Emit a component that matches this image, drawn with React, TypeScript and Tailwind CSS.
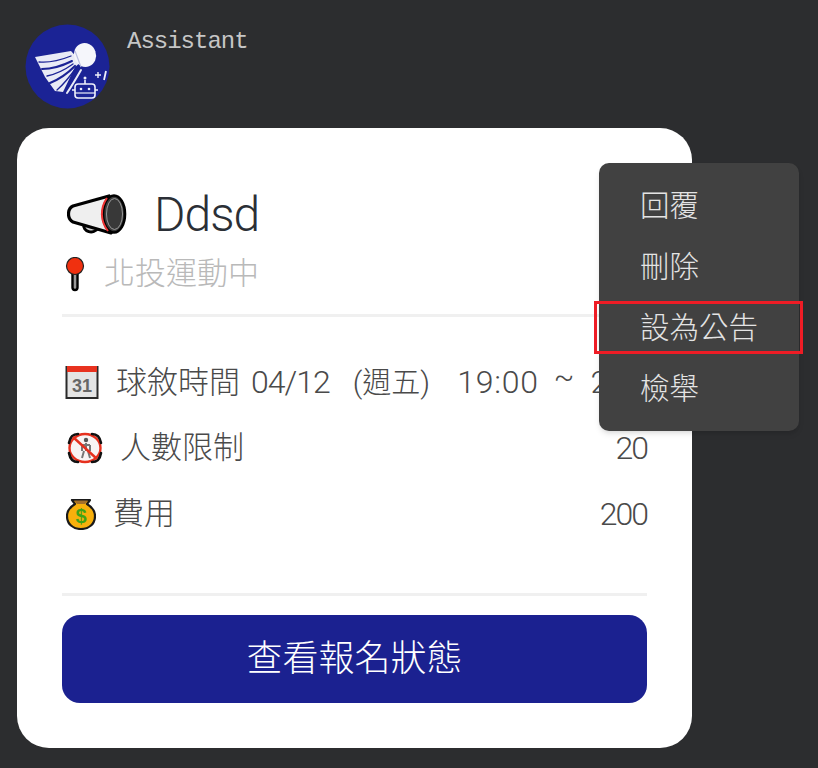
function Avatar() {
  return (
    <svg viewBox="0 0 85 85" className="w-[85px] h-[85px] shrink-0">
      <circle cx="42.5" cy="42.5" r="42" fill="#1b2395" />
      <path d="M10 33 L46 27 L56 38 L50 43 L38 68 L30 67 L20 53 Z" fill="#e9ebf6" />
      <g stroke="#1b2395" fill="none" strokeLinecap="round">
        <path d="M14 38 C24 39 36 36 46 32" strokeWidth="1.3" />
        <path d="M17 45 C28 45 39 41 47 37" strokeWidth="2" />
        <path d="M22 52 C32 50 41 45 48 40" strokeWidth="1.3" />
        <path d="M25 59 C35 55 44 48 50 42" strokeWidth="2.2" />
        <path d="M32 66 C40 59 46 51 51 44" strokeWidth="1.3" />
      </g>
      <path d="M42 69 C48 60 52 53 56 46" fill="none" stroke="#e9ebf6" strokeWidth="2" strokeLinecap="round" />
      <ellipse cx="60" cy="31" rx="11" ry="12" transform="rotate(-20 60 31)" fill="#f5f6fb" />
      <path d="M50 27 L56 43" stroke="#b9bde0" strokeWidth="1.2" />
      <g stroke="#eef0fa" fill="none" strokeWidth="1.6">
        <rect x="50" y="60" width="20" height="14" rx="3" />
        <path d="M47 66 H50 M70 66 H73 M60 56 V60" />
      </g>
      <circle cx="60" cy="54" r="1.5" fill="#eef0fa" />
      <circle cx="56" cy="65" r="1.3" fill="#eef0fa" />
      <circle cx="64" cy="65" r="1.3" fill="#eef0fa" />
      <path d="M50 69 H70" stroke="#eef0fa" strokeWidth="1.2" />
      <path d="M70 51 H76 M73 48 V54" stroke="#eef0fa" strokeWidth="1.4" />
      <path d="M79 56 L81 47" stroke="#eef0fa" strokeWidth="1.8" />
    </svg>
  );
}

function Megaphone() {
  return (
    <svg viewBox="0 0 60 42" className="ml-[5px] w-[60px] h-[42px]">
      <path d="M17 30 C15 38 27 41 31 34 Z" fill="#cfcfcf" stroke="#000" strokeWidth="3" />
      <path d="M6 12 L42 2 C36 12 36 28 44 39 L6 28 C0 25 0 15 6 12 Z" fill="#efefef" stroke="#000" strokeWidth="3.2" strokeLinejoin="round" />
      <ellipse cx="47" cy="20" rx="11" ry="18.5" fill="#3a3a3a" stroke="#000" strokeWidth="2.6" />
      <ellipse cx="47.5" cy="20" rx="8" ry="15.5" fill="#383838" stroke="#9a9a9a" strokeWidth="1" />
      <path d="M40 4 C33 14 33 27 41 37" fill="none" stroke="#ee3333" strokeWidth="2" />
    </svg>
  );
}

function Pin() {
  return (
    <svg viewBox="0 0 20 35" className="ml-[3px] w-[20px] h-[35px]">
      <rect x="7.5" y="14" width="5" height="19" rx="2.5" fill="#9a9a9a" stroke="#000" strokeWidth="2.4" />
      <circle cx="10" cy="9" r="8.5" fill="#f0300f" stroke="#222" strokeWidth="1.2" />
    </svg>
  );
}

function CalendarIcon() {
  return (
    <svg viewBox="0 0 34 34" className="ml-[3px] w-[34px] h-[34px] shrink-0">
      <rect x="1.5" y="2" width="31" height="31" fill="#e4e4e4" stroke="#2a2a2a" strokeWidth="2" />
      <rect x="2" y="1" width="30" height="6" fill="#e8321f" />
      <text x="17" y="27" textAnchor="middle" fontSize="18" fontWeight="700" fill="#666" className="font-['Liberation_Sans']">31</text>
    </svg>
  );
}

function NoPeople() {
  return (
    <svg viewBox="0 0 36 32" className="ml-[5px] w-[36px] h-[32px] shrink-0">
      <ellipse cx="18" cy="16" rx="15.5" ry="14" fill="#f8f4f4" stroke="#e6301e" strokeWidth="2.4" />
      <g fill="none" stroke="#111" strokeWidth="2.6" strokeLinecap="round">
        <path d="M2 11 C3 5 6 2 11 2" />
        <path d="M25 2 C30 2 33 5 34 11" />
        <path d="M2 21 C3 27 6 30 11 30" />
        <path d="M25 30 C30 30 33 27 34 21" />
      </g>
      <circle cx="19" cy="8" r="2.2" fill="#555" />
      <path d="M19 11 V19 M15 13 H23 M15 13 V19 M23 13 V19 M17 19 L15 26 M21 19 L23 26" stroke="#777" strokeWidth="2" />
      <path d="M6 5 L30 27" stroke="#e6301e" strokeWidth="2.4" />
    </svg>
  );
}

function MoneyBag() {
  return (
    <svg viewBox="0 0 30 32" className="ml-[4px] w-[30px] h-[32px] shrink-0">
      <path d="M6 2 H24 L21 6 C26 9 29 13 29 18 C29 26 23 31 15 31 C7 31 1 26 1 18 C1 13 4 9 9 6 Z" fill="#f8b00c" stroke="#1a1a1a" strokeWidth="2.2" strokeLinejoin="round" />
      <path d="M8 2.5 H22 L19 6 H11 Z" fill="#a5702a" />
      <text x="15" y="25" textAnchor="middle" fontSize="20" fontWeight="700" fill="#3fa317" className="font-['Liberation_Sans']">$</text>
    </svg>
  );
}

function InfoRow({ icon, children, value }: { icon: React.ReactNode; children: React.ReactNode; value?: string }) {
  return (
    <div className="flex items-center justify-between h-[66px]">
      <div className="flex items-center gap-[17px] whitespace-nowrap">
        {icon}
        <span>{children}</span>
      </div>
      {value && <span className="text-[32px] tracking-[-2px]">{value}</span>}
    </div>
  );
}

const menuItems = ["回覆", "刪除", "設為公告", "檢舉"];

export default function App() {
  return (
    <div className="relative h-[768px] w-[818px] overflow-hidden bg-[#2c2d2f] font-['Roboto','Noto_Sans_CJK_TC',sans-serif]">
      <div className="flex gap-[17px] pl-[25px] pt-[24px] h-[128px]">
        <Avatar />
        <div className="font-['Liberation_Mono',monospace] text-[24px] tracking-[-1px] leading-[36px] text-[#c6c6c6]">Assistant</div>
      </div>

      <div className="ml-[17px] w-[675px] h-[620px] rounded-[32px] bg-white px-[45px] pt-[61px] overflow-hidden">
        <div className="flex items-center gap-[27px] h-[52px]">
          <Megaphone />
          <h1 className="text-[48px] font-light leading-none tracking-[-1px] text-[#2b2f36]">Ddsd</h1>
        </div>
        <div className="flex items-center gap-[19px] mt-[9px] h-[48px] text-[31px] font-light text-[#b9b9b9]">
          <Pin />
          <span>北投運動中</span>
        </div>
        <div className="mt-[16px] h-[3px] bg-[#f0f0f0]" />

        <div className="mt-[32px] text-[31px] font-light text-[#4a4a4a]">
          <InfoRow icon={<CalendarIcon />}>
            球敘時間
            <span className="ml-[11px] text-[32px] tracking-[-1px]">04/12</span>
            <span className="ml-[23px] text-[30px]">(</span>
            <span className="text-[29px]">週五</span>
            <span className="text-[30px]">)</span>
            <span className="ml-[27px] text-[32px] tracking-[0.8px]">19:00</span>
            <span className="ml-[15px] text-[30px] leading-none align-[6px]">~</span>
            <span className="ml-[16px] text-[32px]">2</span>
          </InfoRow>
          <InfoRow icon={<NoPeople />} value="20">人數限制</InfoRow>
          <InfoRow icon={<MoneyBag />} value="200">費用</InfoRow>
        </div>

        <div className="mt-[46px] h-[3px] bg-[#f0f0f0]" />
        <button className="mt-[19px] flex h-[88px] w-full items-center justify-center rounded-[18px] bg-[#1b2190] text-[36px] font-light text-white">
          查看報名狀態
        </button>
      </div>

      <div className="absolute left-[599px] top-[163px] w-[200px] h-[268px] rounded-[10px] bg-[#414141] pt-[13px] shadow-md">
        {menuItems.map((item) => (
          <div key={item} className="flex h-[61px] items-center pl-[41px] text-[29.5px] font-light text-[#e4e4e4]">
            {item}
          </div>
        ))}
      </div>

      <div className="absolute left-[594px] top-[301px] w-[209px] h-[53px] border-[3px] border-[#ee1c25]" />
    </div>
  );
}
